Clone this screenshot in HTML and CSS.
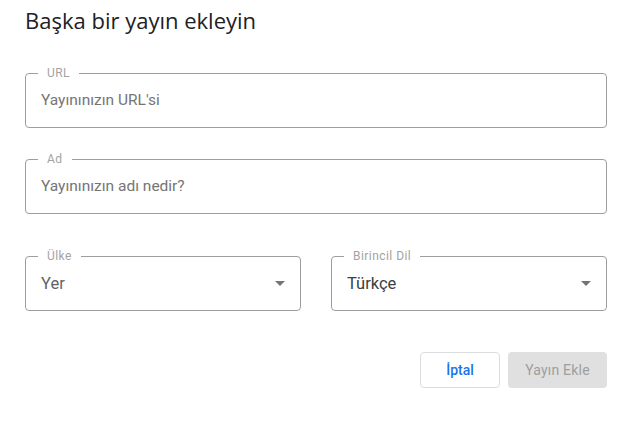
FILE: index.html
```html
<!DOCTYPE html>
<html lang="tr">
<head>
<meta charset="utf-8">
<title>Başka bir yayın ekleyin</title>
<link rel="stylesheet" href="styles.css">
</head>
<body>
<div class="dialog">
  <h1 class="title">Başka bir yayın ekleyin</h1>
  <form class="form">
    <fieldset class="field">
      <legend class="label">URL</legend>
      <div class="value placeholder">Yayınınızın URL'si</div>
    </fieldset>
    <fieldset class="field">
      <legend class="label">Ad</legend>
      <div class="value placeholder">Yayınınızın adı nedir?</div>
    </fieldset>
    <div class="row">
      <fieldset class="field select">
        <legend class="label">Ülke</legend>
        <div class="value muted">Yer<span class="arrow"></span></div>
      </fieldset>
      <fieldset class="field select">
        <legend class="label">Birincil Dil</legend>
        <div class="value">Türkçe<span class="arrow"></span></div>
      </fieldset>
    </div>
    <div class="actions">
      <button type="button" class="btn btn-outline">İptal</button>
      <button type="button" class="btn btn-disabled">Yayın Ekle</button>
    </div>
  </form>
</div>
</body>
</html>
```
FILE: styles.css
```css
html, body {
  margin: 0;
  padding: 0;
  background: #ffffff;
}

.dialog {
  width: 582px;
  padding: 6px 0 0 25px;
  font-family: Roboto, "Liberation Sans", sans-serif;
}

.title {
  margin: 0;
  font-family: "Open Sans", Roboto, sans-serif;
  font-weight: 400;
  font-size: 22px;
  line-height: 28px;
  color: #202124;
}

.form {
  display: flex;
  flex-direction: column;
  margin-top: 32px;
}

.field {
  margin: 0 0 24px 0;
  padding: 0 15px 7px 15px;
  border: 1px solid #9e9e9e;
  border-radius: 4px;
  min-width: 0;
}

.label {
  margin-left: -3px;
  padding: 0 9px;
  font-size: 12px;
  line-height: 14px;
  letter-spacing: 0.45px;
  color: #a3a3a3;
}

.value {
  display: flex;
  align-items: center;
  height: 40px;
  font-size: 15.5px;
  color: #3c4043;
}

.placeholder {
  color: #757575;
}

.select .value {
  font-size: 16.5px;
}

.muted {
  color: #5f6368;
}

.row {
  display: flex;
  gap: 30px;
  margin-top: 11px;
}

.row .field {
  flex: 1 1 0;
  margin-bottom: 0;
}

.arrow {
  margin-left: auto;
  width: 0;
  height: 0;
  border-left: 5px solid transparent;
  border-right: 5px solid transparent;
  border-top: 5px solid #757575;
}

.actions {
  display: flex;
  justify-content: flex-end;
  gap: 8px;
  margin-top: 41px;
}

.btn {
  height: 36px;
  border-radius: 4px;
  font-family: Roboto, sans-serif;
  font-weight: 500;
  font-size: 14px;
  padding: 0;
}

.btn-outline {
  width: 80px;
  background: #ffffff;
  border: 1px solid #dadce0;
  color: #1a73e8;
}

.btn-disabled {
  width: 99px;
  background: #e0e0e0;
  border: none;
  color: #9e9e9e;
  font-weight: 400;
  letter-spacing: 0.2px;
}
```
